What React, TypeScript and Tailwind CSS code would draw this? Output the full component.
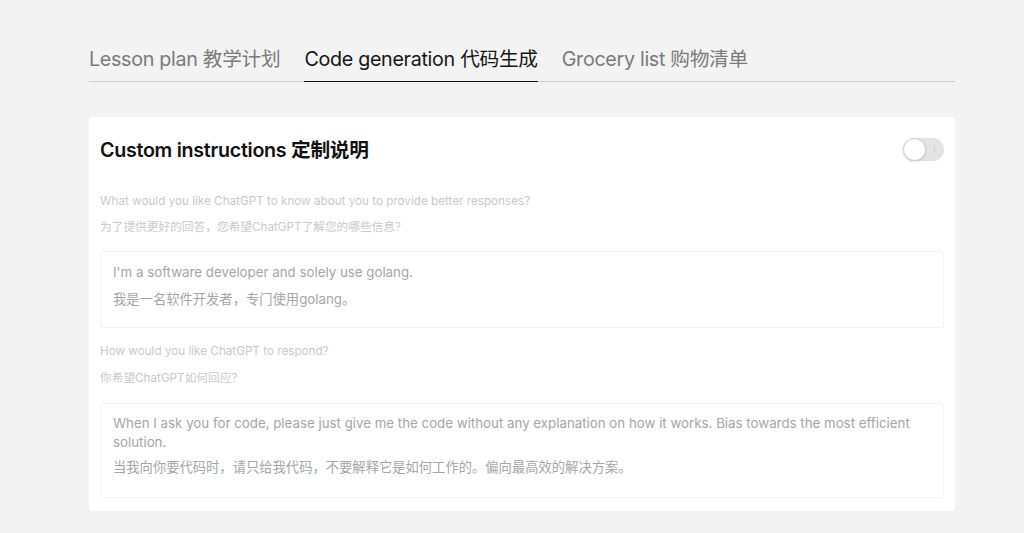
import { useState } from 'react';

const tabs = [
  { label: 'Lesson plan 教学计划' },
  { label: 'Code generation 代码生成' },
  { label: 'Grocery list 购物清单' },
];

export default function App() {
  const [active, setActive] = useState(1);
  const [enabled, setEnabled] = useState(false);

  return (
    <div
      className="min-h-[533px] w-full bg-[#f3f3f3] pl-[89px] pr-[69px] pt-[45px]"
      style={{ fontFamily: 'Inter, "Noto Sans CJK SC", sans-serif' }}
    >
      {/* Tab bar */}
      <div className="flex gap-[24px] border-b border-[#cfcfcf]">
        {tabs.map((t, i) => (
          <button
            key={t.label}
            onClick={() => setActive(i)}
            className={`-mb-px pb-[8px] text-[19.7px] leading-[28px] tracking-[-0.3px] ${
              i === active ? 'border-b-[1.5px] border-[#111] text-[#161616]' : 'border-b border-transparent text-[#7a7a7a]'
            }`}
          >
            {t.label}
          </button>
        ))}
      </div>

      {/* Card */}
      <div className="mt-[35px] rounded-[4px] bg-white px-[11px] pb-[13px] pt-[20px]">
        <div className="flex items-center justify-between">
          <h2 className="text-[19.7px] font-semibold leading-[26px] tracking-[-0.3px] text-[#111]">Custom instructions 定制说明</h2>
          <button
            onClick={() => setEnabled(!enabled)}
            className={`relative -mt-[2px] h-[23px] w-[41px] rounded-full ${enabled ? 'bg-[#10a37f]' : 'bg-[#e4e4e4]'}`}
          >
            <span
              className={`absolute top-0 h-[23px] w-[23px] rounded-full border border-[#cfcfcf] bg-white shadow-sm ${
                enabled ? 'left-[18px]' : 'left-0'
              }`}
            />
            <span className="absolute left-[31px] top-[8px] h-[7px] w-px bg-[#d0d0d0]" />
          </button>
        </div>

        <div className="mt-[30px] text-[11.7px] leading-[16px] text-[#c9c9c9]">
          <p>What would you like ChatGPT to know about you to provide better responses?</p>
          <p className="mt-[10px]">为了提供更好的回答，您希望ChatGPT了解您的哪些信息？</p>
        </div>

        <div className="mt-[16px] h-[77px] rounded-[3px] border border-[#f3f3f3] px-[12px] pt-[11px] text-[13.3px] leading-[19px] text-[#a6a6a6]">
          <p>I'm a software developer and solely use golang.</p>
          <p className="mt-[8px]">我是一名软件开发者，专门使用golang。</p>
        </div>

        <div className="mt-[15px] text-[11.7px] leading-[16px] text-[#c9c9c9]">
          <p>How would you like ChatGPT to respond?</p>
          <p className="mt-[11px]">你希望ChatGPT如何回应？</p>
        </div>

        <div className="mt-[17px] h-[95px] rounded-[3px] border border-[#f3f3f3] px-[12px] pt-[10px] text-[13.3px] leading-[19px] text-[#a6a6a6]">
          <p>
            When I ask you for code, please just give me the code without any explanation on how it works. Bias towards the most efficient
            solution.
          </p>
          <p className="mt-[6px]">当我向你要代码时，请只给我代码，不要解释它是如何工作的。偏向最高效的解决方案。</p>
        </div>
      </div>
    </div>
  );
}
